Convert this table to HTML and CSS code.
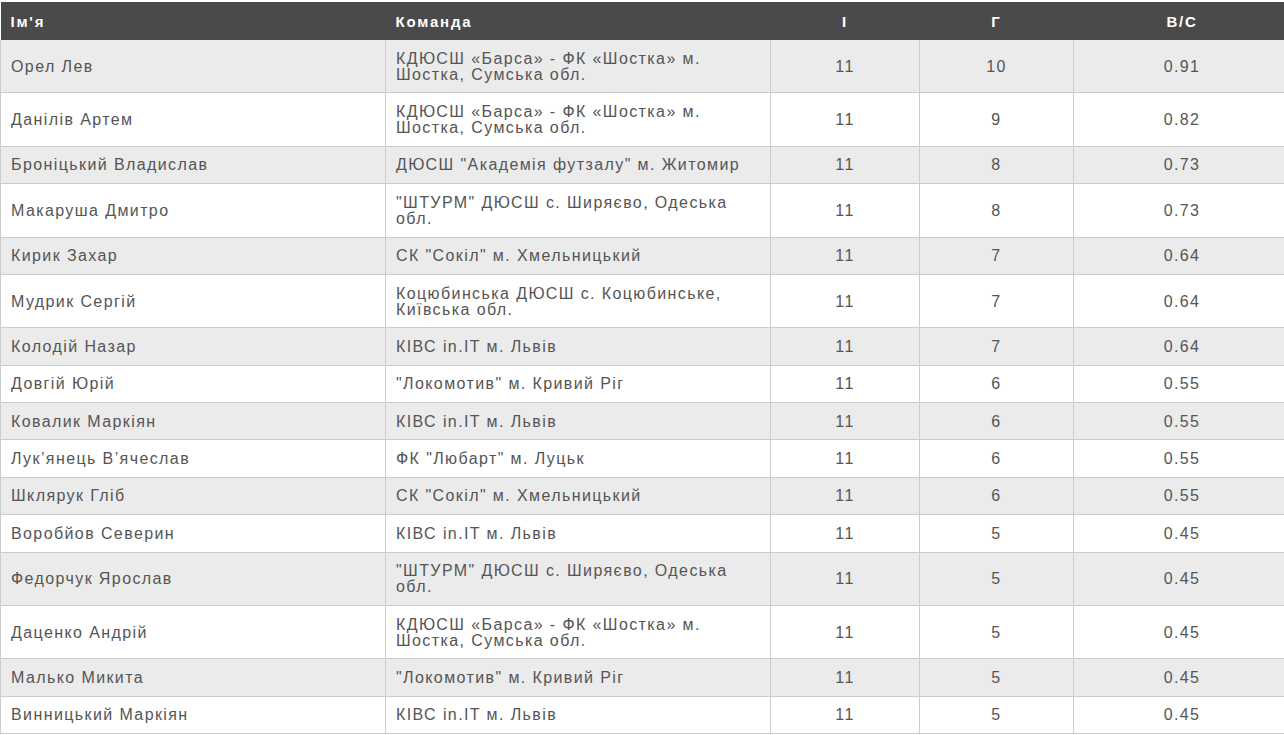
FILE: index.html
```html
<!DOCTYPE html>
<html lang="uk">
<head>
<meta charset="utf-8">
<title>Бомбардири</title>
<link rel="stylesheet" href="styles.css">
</head>
<body>
<table class="stats">
  <colgroup>
    <col class="c-name"><col class="c-team"><col class="c-games"><col class="c-goals"><col class="c-avg">
  </colgroup>
  <thead>
    <tr><th class="left">Ім'я</th><th class="left">Команда</th><th>І</th><th>Г</th><th>В/С</th></tr>
  </thead>
  <tbody>
    <tr><td>Орел Лев</td><td>КДЮСШ «Барса» - ФК «Шостка» м. Шостка, Сумська обл.</td><td class="num">11</td><td class="num">10</td><td class="num">0.91</td></tr>
    <tr><td>Данілів Артем</td><td>КДЮСШ «Барса» - ФК «Шостка» м. Шостка, Сумська обл.</td><td class="num">11</td><td class="num">9</td><td class="num">0.82</td></tr>
    <tr><td>Броніцький Владислав</td><td>ДЮСШ "Академія футзалу" м. Житомир</td><td class="num">11</td><td class="num">8</td><td class="num">0.73</td></tr>
    <tr><td>Макаруша Дмитро</td><td>"ШТУРМ" ДЮСШ с. Ширяєво, Одеська обл.</td><td class="num">11</td><td class="num">8</td><td class="num">0.73</td></tr>
    <tr><td>Кирик Захар</td><td>СК "Сокіл" м. Хмельницький</td><td class="num">11</td><td class="num">7</td><td class="num">0.64</td></tr>
    <tr><td>Мудрик Сергій</td><td>Коцюбинська ДЮСШ с. Коцюбинське, Київська обл.</td><td class="num">11</td><td class="num">7</td><td class="num">0.64</td></tr>
    <tr><td>Колодій Назар</td><td>КІВС in.IT м. Львів</td><td class="num">11</td><td class="num">7</td><td class="num">0.64</td></tr>
    <tr><td>Довгій Юрій</td><td>"Локомотив" м. Кривий Ріг</td><td class="num">11</td><td class="num">6</td><td class="num">0.55</td></tr>
    <tr><td>Ковалик Маркіян</td><td>КІВС in.IT м. Львів</td><td class="num">11</td><td class="num">6</td><td class="num">0.55</td></tr>
    <tr><td>Лук’янець В’ячеслав</td><td>ФК "Любарт" м. Луцьк</td><td class="num">11</td><td class="num">6</td><td class="num">0.55</td></tr>
    <tr><td>Шклярук Гліб</td><td>СК "Сокіл" м. Хмельницький</td><td class="num">11</td><td class="num">6</td><td class="num">0.55</td></tr>
    <tr><td>Воробйов Северин</td><td>КІВС in.IT м. Львів</td><td class="num">11</td><td class="num">5</td><td class="num">0.45</td></tr>
    <tr><td>Федорчук Ярослав</td><td>"ШТУРМ" ДЮСШ с. Ширяєво, Одеська обл.</td><td class="num">11</td><td class="num">5</td><td class="num">0.45</td></tr>
    <tr><td>Даценко Андрій</td><td>КДЮСШ «Барса» - ФК «Шостка» м. Шостка, Сумська обл.</td><td class="num">11</td><td class="num">5</td><td class="num">0.45</td></tr>
    <tr><td>Малько Микита</td><td>"Локомотив" м. Кривий Ріг</td><td class="num">11</td><td class="num">5</td><td class="num">0.45</td></tr>
    <tr><td>Винницький Маркіян</td><td>КІВС in.IT м. Львів</td><td class="num">11</td><td class="num">5</td><td class="num">0.45</td></tr>
  </tbody>
</table>
</body>
</html>
```
FILE: styles.css
```css
html, body {
  margin: 0;
  padding: 0;
  background: #fff;
}
body {
  padding-top: 2px;
  font-family: "Liberation Sans", Arial, sans-serif;
  overflow: hidden;
}
.stats {
  border-collapse: collapse;
  table-layout: fixed;
  width: 1290px;
}
.c-name { width: 385px; }
.c-team { width: 385px; }
.c-games { width: 149px; }
.c-goals { width: 154px; }
.c-avg { width: 217px; }
.stats th {
  background: #4a4a4a;
  color: #fff;
  font-weight: bold;
  font-size: 15px;
  letter-spacing: 1.8px;
  text-align: center;
  height: 38px;
  padding: 2px 10px 0;
  box-sizing: border-box;
  line-height: 16px;
}
.stats th.left { text-align: left; padding-left: 10px; }
.stats td {
  color: #555;
  font-size: 16px;
  letter-spacing: 1.4px;
  line-height: 16px;
  padding: 10.7px 10px 9.7px 10px;
  border: 1px solid #cccccc;
  border-top: 0;
  vertical-align: middle;
  text-align: left;
}
.stats td.num { text-align: center; }
.stats tbody tr:nth-child(odd) td { background: #ebebeb; }
.stats tbody tr:nth-child(even) td { background: #fff; }
```
